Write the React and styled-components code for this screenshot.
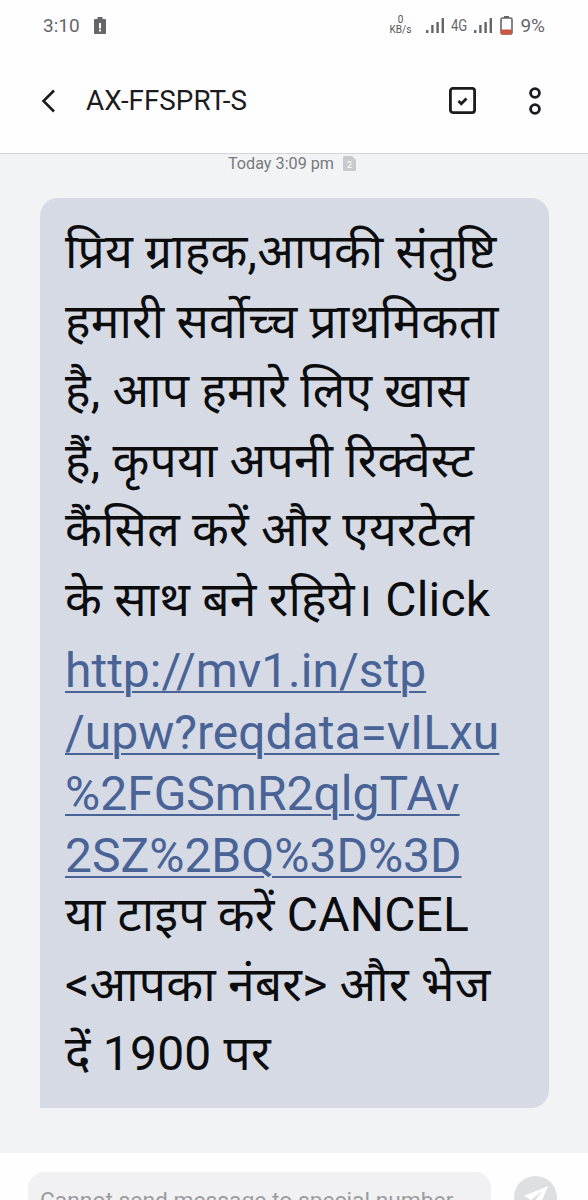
import React from "react";
import styled, { createGlobalStyle } from "styled-components";

const Global = createGlobalStyle`
  html, body { margin: 0; padding: 0; background: #f2f3f5; }
  body { font-family: "Roboto", "Noto Sans", sans-serif; }
`;

const Page = styled.div`
  width: 588px;
  height: 1200px;
  overflow: hidden;
  display: flex;
  flex-direction: column;
  background: #f2f3f5;
`;

const Top = styled.header`
  height: 153px;
  flex-shrink: 0;
  background: #fefdff;
  border-bottom: 1px solid #d6d6d8;
`;

const StatusBar = styled.div`
  height: 50px;
  padding: 0 43px;
  display: flex;
  align-items: center;
  justify-content: space-between;
  color: #666;
  font-size: 19px;
`;

const Cluster = styled.div`
  display: flex;
  align-items: center;
  gap: ${(p) => p.$gap || 7}px;
`;

const Speed = styled.div`
  margin-right: 8px;
  color: #555;
  font-size: 10px;
  line-height: 10px;
  text-align: center;
`;

const Network = styled.span`
  display: inline-block;
  width: 16px;
  min-width: 0;
  font-size: 16px;
  white-space: nowrap;
  transform: scaleX(0.82);
  transform-origin: left center;
`;

const AppBar = styled.div`
  height: 103px;
  padding: 0 47px 2px 41px;
  box-sizing: border-box;
  display: flex;
  align-items: center;
  justify-content: space-between;
`;

const Title = styled.h1`
  margin: 0 0 0 24px;
  font-size: 27.8px;
  font-weight: 400;
  color: #1c1c1e;
`;

const Thread = styled.main`
  flex: 1;
  padding: 0 39px 0 40px;
`;

const Stamp = styled.div`
  height: 44px;
  padding-right: 5px;
  display: flex;
  align-items: flex-start;
  justify-content: center;
  gap: 9px;
  color: #77797d;
  font-size: 16.2px;
  line-height: 20px;
`;

const Bubble = styled.div`
  box-sizing: border-box;
  width: 509px;
  height: 910px;
  padding: 19px 24px 0 25px;
  background: #d5dae5;
  border-radius: 18px 18px 18px 0;
  color: #0c0c0c;
  font-family: "Roboto", "Noto Sans", sans-serif;
  font-size: 48px;
`;

const Line = styled.div`
  height: 69.5px;
  line-height: 69.5px;
  letter-spacing: 0.2px;
  white-space: nowrap;
`;

const Link = styled.a`
  display: block;
  height: 61.5px;
  line-height: 74px;
  color: #4a6396;
  text-decoration: underline;
  text-decoration-thickness: 2px;
  text-underline-offset: 4px;
  white-space: nowrap;
`;

const Composer = styled.footer`
  box-sizing: border-box;
  height: 47px;
  flex-shrink: 0;
  padding: 19px 31px 0 28px;
  background: #fefdff;
  display: flex;
  justify-content: space-between;
  align-items: flex-start;
`;

const Field = styled.div`
  box-sizing: border-box;
  flex-shrink: 0;
  width: 463px;
  height: 60px;
  padding: 15px 12px;
  border-radius: 16px;
  background: #f1f1f3;
  color: #9a9ca0;
  font-size: 22.8px;
  white-space: nowrap;
`;

const SendButton = styled.div`
  width: 43px;
  height: 43px;
  flex-shrink: 0;
  margin-top: 4px;
  border-radius: 50%;
  background: #dedfe1;
  display: flex;
  align-items: center;
  justify-content: center;
`;

const message = [
  "प्रिय ग्राहक,आपकी संतुष्टि",
  "हमारी सर्वोच्च प्राथमिकता",
  "है, आप हमारे लिए खास",
  "हैं, कृपया अपनी रिक्वेस्ट",
  "कैंसिल करें और एयरटेल",
  "के साथ बने रहिये। Click",
];

const tail = ["या टाइप करें CANCEL", "<आपका नंबर> और भेज", "दें 1900 पर"];

const Signal = () => (
  <svg width="18" height="15" viewBox="0 0 18 15" fill="#666">
    <rect x="0" y="12" width="2.4" height="3" />
    <rect x="5.2" y="7" width="2.4" height="8" />
    <rect x="10.4" y="4" width="2.4" height="11" />
    <rect x="15.6" y="0" width="2.4" height="15" />
  </svg>
);

const App = () => (
  <Page>
    <Global />
    <Top>
      <StatusBar>
        <Cluster $gap={14}>
          <span>3:10</span>
          <svg width="12" height="17" viewBox="0 0 12 17">
            <path d="M3.5 0h5v2H11a1 1 0 0 1 1 1v13a1 1 0 0 1-1 1H1a1 1 0 0 1-1-1V3a1 1 0 0 1 1-1h2.5z" fill="#666" />
            <rect x="5" y="6" width="2" height="5.5" fill="#fff" />
            <rect x="5" y="12.5" width="2" height="2" fill="#fff" />
          </svg>
        </Cluster>
        <Cluster>
          <Speed>0<br />KB/s</Speed>
          <Signal />
          <Network>4G</Network>
          <Signal />
          <svg width="13" height="19" viewBox="0 0 13 19" style={{ marginLeft: 1 }}>
            <rect x="4" y="0" width="5" height="2" fill="#666" />
            <rect x="1" y="2" width="11" height="16" rx="1.5" fill="none" stroke="#666" strokeWidth="1.6" />
            <rect x="1" y="13.5" width="11" height="5" rx="1" fill="#c9583f" />
          </svg>
          <span>9%</span>
        </Cluster>
      </StatusBar>
      <AppBar>
        <Cluster>
          <svg width="14" height="24" viewBox="0 0 14 24" fill="none" stroke="#1c1c1e" strokeWidth="2.6">
            <path d="M13 1.5 2.5 12 13 22.5" />
          </svg>
          <Title>AX-FFSPRT-S</Title>
        </Cluster>
        <Cluster $gap={53}>
          <svg width="27" height="27" viewBox="0 0 27 27" fill="none" stroke="#1c1c1e" strokeWidth="2.8">
            <rect x="1.4" y="1.4" width="24.2" height="24.2" rx="2.5" />
            <path d="m9.5 14 2.8 2.8 5.2-5.2" />
          </svg>
          <svg width="12" height="28" viewBox="0 0 12 28" fill="none" stroke="#1c1c1e" strokeWidth="2.8">
            <circle cx="6" cy="6" r="4.4" />
            <circle cx="6" cy="22" r="4.4" />
          </svg>
        </Cluster>
      </AppBar>
    </Top>
    <Thread>
      <Stamp>
        <span>Today 3:09 pm</span>
        <svg width="13" height="15" viewBox="0 0 13 15" style={{ marginTop: 2 }}>
          <path d="M1.5 0H9l4 4v9.5a1.5 1.5 0 0 1-1.5 1.5h-10A1.5 1.5 0 0 1 0 13.5v-12A1.5 1.5 0 0 1 1.5 0z" fill="#c8cacc" />
          <text x="6.5" y="12" fontSize="9" textAnchor="middle" fill="#fff" fontFamily="Roboto">2</text>
        </svg>
      </Stamp>
      <Bubble>
        {message.map((t) => <Line key={t}>{t}</Line>)}
        <Link>http://mv1.in/stp</Link>
        <Link>/upw?reqdata=vILxu</Link>
        <Link>%2FGSmR2qlgTAv</Link>
        <Link>2SZ%2BQ%3D%3D</Link>
        {tail.map((t) => <Line key={t}>{t}</Line>)}
      </Bubble>
    </Thread>
    <Composer>
      <Field>Cannot send message to special number</Field>
      <SendButton>
        <svg width="26" height="26" viewBox="0 0 26 26" fill="#fff">
          <path d="M25 1 1 11l7 4 11-9-8 11 4 8z" />
        </svg>
      </SendButton>
    </Composer>
  </Page>
);

export default App;
